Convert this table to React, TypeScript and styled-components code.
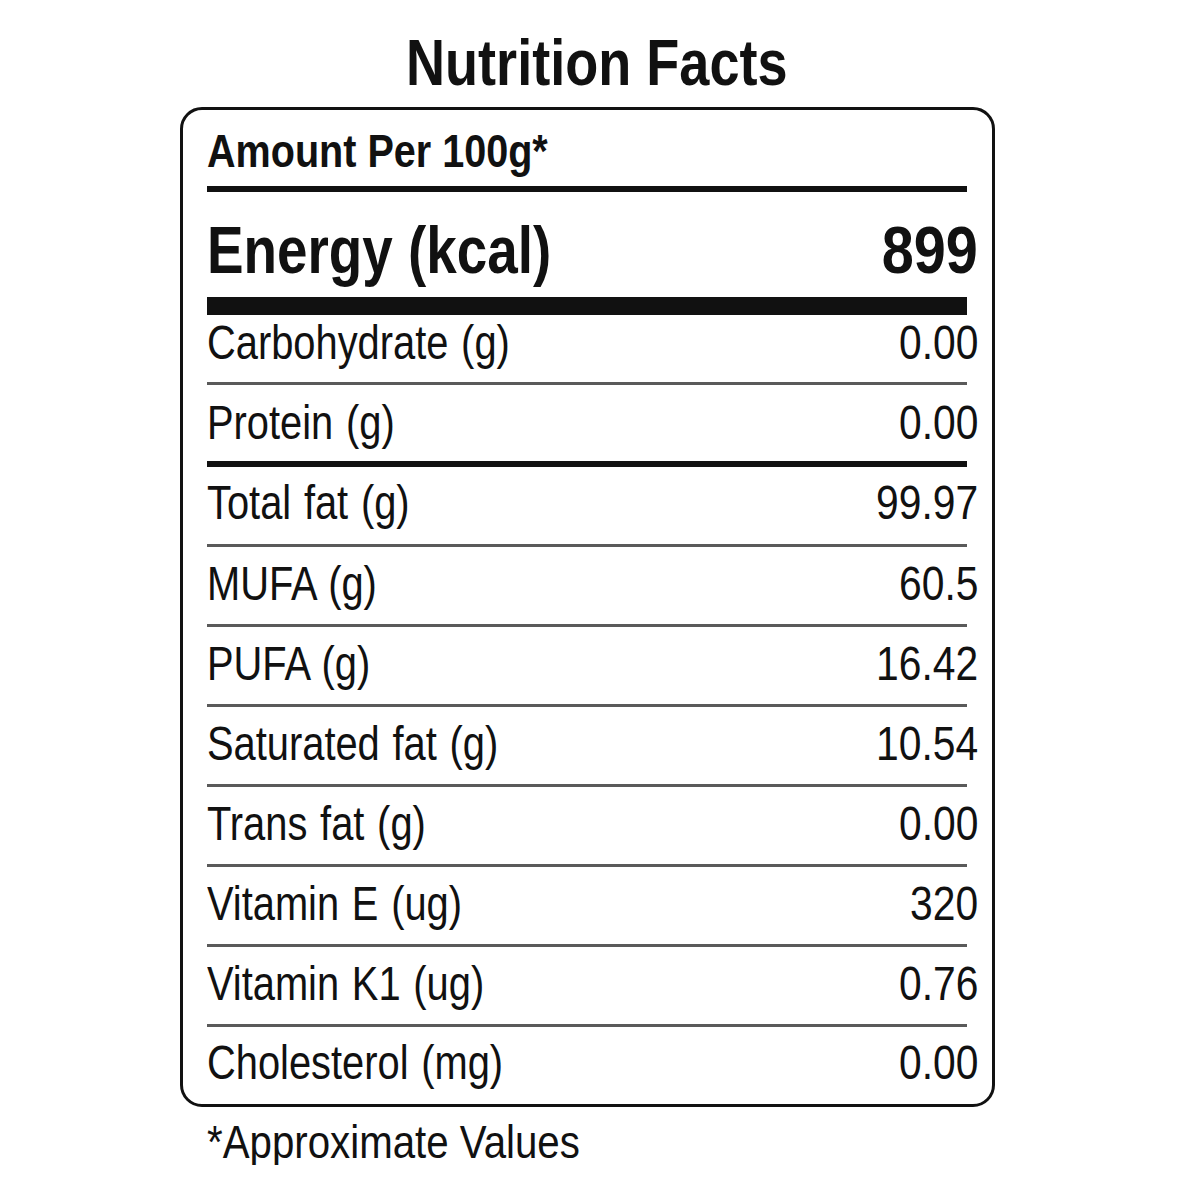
import * as React from "react";
import styled, { createGlobalStyle } from "styled-components";

type Rule = "thin" | "thick" | "none";

interface Nutrient {
  label: string;
  value: string;
  pt: number;
  pb: number;
  rule: Rule;
}

const nutrients: Nutrient[] = [
  { label: "Carbohydrate (g)", value: "0.00", pt: 4, pb: 15, rule: "thin" },
  { label: "Protein (g)", value: "0.00", pt: 14, pb: 14, rule: "thick" },
  { label: "Total fat (g)", value: "99.97", pt: 12, pb: 17, rule: "thin" },
  { label: "MUFA (g)", value: "60.5", pt: 13, pb: 16, rule: "thin" },
  { label: "PUFA (g)", value: "16.42", pt: 13, pb: 16, rule: "thin" },
  { label: "Saturated fat (g)", value: "10.54", pt: 13, pb: 16, rule: "thin" },
  { label: "Trans fat (g)", value: "0.00", pt: 13, pb: 16, rule: "thin" },
  { label: "Vitamin E (ug)", value: "320", pt: 13, pb: 16, rule: "thin" },
  { label: "Vitamin K1 (ug)", value: "0.76", pt: 13, pb: 16, rule: "thin" },
  { label: "Cholesterol (mg)", value: "0.00", pt: 12, pb: 17, rule: "none" },
];

// Narrow face isn't installed, so squeeze Liberation Sans horizontally
const App = () => {
  return (
    <>
      <GlobalStyle />
      <Page>
        <Title>
          <Squeeze $scale={0.845} $origin="center">
            Nutrition Facts
          </Squeeze>
        </Title>
        <Label>
          <Amount>
            <Squeeze $scale={0.86}>Amount Per 100g*</Squeeze>
          </Amount>
          <EnergyRow>
            <Squeeze $scale={0.818}>Energy (kcal)</Squeeze>
            <Value>
              <Squeeze $scale={0.86} $origin="right">
                899
              </Squeeze>
            </Value>
          </EnergyRow>
          {nutrients.map((n) => (
            <Row key={n.label} $pt={n.pt} $pb={n.pb} $rule={n.rule}>
              <RowLabel>
                <Squeeze $scale={0.83}>{n.label}</Squeeze>
              </RowLabel>
              <Value>
                <Squeeze $scale={0.85} $origin="right">
                  {n.value}
                </Squeeze>
              </Value>
            </Row>
          ))}
        </Label>
        <Footnote>
          <Squeeze $scale={0.875}>*Approximate Values</Squeeze>
        </Footnote>
      </Page>
    </>
  );
};

const GlobalStyle = createGlobalStyle`
  body {
    margin: 0;
    background: #ffffff;
    color: #111111;
    font-family: "Liberation Sans", Arial, sans-serif;
  }
`;

const Page = styled.div`
  width: 1200px;
  padding-top: 31px;
`;

const Squeeze = styled.span<{ $scale: number; $origin?: "left" | "right" | "center" }>`
  display: inline-block;
  white-space: nowrap;
  transform: scaleX(${(p) => p.$scale});
  transform-origin: ${(p) => p.$origin ?? "left"} center;
`;

const Title = styled.h1`
  margin: 0 0 12px;
  font-size: 64px;
  line-height: 64px;
  font-weight: 700;
  text-align: center;
  padding-right: 6px;
`;

const Label = styled.div`
  box-sizing: border-box;
  width: 815px;
  margin-left: 180px;
  border: 3px solid #111111;
  border-radius: 22px;
  padding: 0 25px 0 24px;
`;

const Amount = styled.div`
  padding: 18px 0 12px;
  border-bottom: 6px solid #111111;
  font-size: 46px;
  line-height: 46px;
  font-weight: 700;
`;

const EnergyRow = styled.div`
  display: flex;
  justify-content: space-between;
  padding: 24px 0 14px;
  border-bottom: 18px solid #111111;
  font-size: 67px;
  line-height: 67px;
  font-weight: 700;
`;

const Row = styled.div<{ $pt: number; $pb: number; $rule: Rule }>`
  display: flex;
  justify-content: space-between;
  padding: ${(p) => p.$pt}px 0 ${(p) => p.$pb}px;
  font-size: 48px;
  line-height: 48px;
  border-bottom: ${(p) =>
    p.$rule === "thick"
      ? "6px solid #111111"
      : p.$rule === "thin"
      ? "3px solid #5a5a5a"
      : "none"};
`;

const RowLabel = styled.span`
  word-spacing: 2px;
`;

const Value = styled.span`
  margin-right: -11px;
`;

const Footnote = styled.div`
  margin: 12px 0 0 207px;
  font-size: 46px;
  line-height: 46px;
`;

export default App;
